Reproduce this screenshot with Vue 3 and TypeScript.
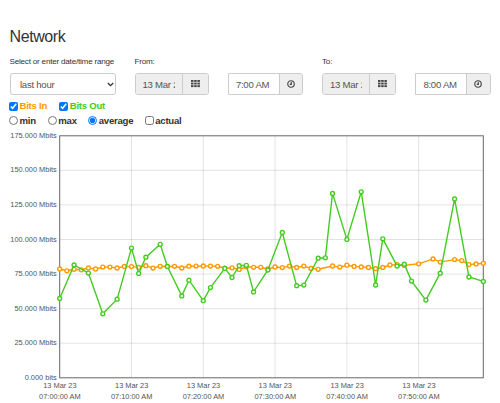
<script setup lang="ts">
import { ref } from 'vue'

type Sample = [minute: number, y: number]

const range = ref('last hour')
const mode = ref('average')
const showIn = ref(true)
const showOut = ref(true)
const actual = ref(false)

const pickers = [
  { label: 'From:', date: '13 Mar 23', time: '7:00 AM' },
  { label: 'To:', date: '13 Mar 23', time: '8:00 AM' },
]
const modes = ['min', 'max', 'average']

const left = 59.7
const right = 483.3
const top = 135.8
const bottom = 377.8
const px = (minute: number) => left + (minute * (right - left)) / 59

const yTicks = [175, 150, 125, 100, 75, 50, 25, 0].map((v) => ({
  y: bottom - (v * (bottom - top)) / 175,
  text: v ? `${v}.000 Mbits` : '0.000 bits',
}))
const xTicks = [0, 10, 20, 30, 40, 50].map((m) => ({
  x: px(m),
  text: `07:${String(m).padStart(2, '0')}:00 AM`,
}))

const bitsIn: Sample[] = [
  [0, 269], [1, 270.8], [2, 269.3], [3, 269.8], [4, 268], [5, 269], [6, 267.1], [7, 267.1], [8, 268],
  [9, 266.4], [10, 266.6], [11, 267.4], [12, 265.7], [13, 268.1], [14, 266.3], [15, 266.5], [16, 266.3],
  [17, 268], [18, 266.2], [19, 266.1], [20, 266], [21, 266.1], [22, 266.3], [23, 268.1], [24, 267.8],
  [25, 269.4], [26, 266.8], [27, 267.3], [28, 267.3], [29, 269], [30, 267], [31, 267.6], [32, 266.1],
  [33, 267.5], [34, 266.1], [35, 268.4], [36, 269.3], [38, 266], [39, 267.1], [40, 265.2], [41, 266.4],
  [42, 266.9], [43, 267.5], [44, 268.7], [45, 267.5], [46, 265], [47, 264.6], [48, 265.4], [50, 263.8],
  [52, 258.9], [53, 262.1], [55, 259.6], [56, 260.6], [57, 264.6], [58, 263.9], [59, 263.2],
]
const bitsOut: Sample[] = [
  [0, 298.5], [2, 265], [4, 273.1], [6, 313.8], [8, 299.2], [10, 248.1], [11, 273.4], [12, 257.2],
  [14, 244.3], [15, 266.5], [17, 295.9], [18, 280.2], [20, 300.7], [21, 287.6], [23, 268.4], [24, 277.5],
  [25, 265.7], [26, 265.3], [27, 291.9], [29, 270], [31, 232.5], [33, 285.7], [34, 285.1], [36, 258.2],
  [37, 257.8], [38, 193.4], [40, 239.4], [42, 191.8], [44, 285], [45, 238.8], [47, 266.1], [48, 264.2],
  [49, 281.1], [51, 300.1], [53, 273.2], [55, 198.9], [57, 277], [59, 281.4],
]
const series = [
  { name: 'in', points: bitsIn, visible: showIn },
  { name: 'out', points: bitsOut, visible: showOut },
]
const line = (points: Sample[]) => points.map(([m, y]) => `${px(m)},${y}`).join(' ')
</script>

<template>
  <main class="panel">
    <h1>Network</h1>
    <div class="filters">
      <div class="field range">
        <label for="range">Select or enter date/time range</label>
        <div class="select-wrap">
          <select id="range" v-model="range">
            <option>last hour</option>
          </select>
          <svg class="chevron" viewBox="0 0 7 5"><path d="M.8 1 3.5 3.7 6.2 1" /></svg>
        </div>
      </div>
      <div v-for="p in pickers" :key="p.label" class="field picker">
        <label>{{ p.label }}</label>
        <div class="inputs">
          <div class="group date">
            <div class="value"><span>{{ p.date }}</span></div>
            <button type="button" aria-label="Choose date">
              <svg class="grid-icon" viewBox="0 0 9 8">
                <g v-for="r in 3" :key="r">
                  <rect v-for="c in 3" :key="c" :x="(c - 1) * 3.2" :y="(r - 1) * 2.6" width="2.5" height="1.9" />
                </g>
              </svg>
            </button>
          </div>
          <div class="group time">
            <div class="value"><span>{{ p.time }}</span></div>
            <button type="button" aria-label="Choose time">
              <svg class="clock-icon" viewBox="0 0 8 8">
                <circle cx="4" cy="4" r="3.25" />
                <path d="M4.3 2V4.3H2.7" />
              </svg>
            </button>
          </div>
        </div>
      </div>
    </div>

    <div class="options series-options">
      <label class="in"><input v-model="showIn" type="checkbox" />Bits In</label>
      <label class="out"><input v-model="showOut" type="checkbox" />Bits Out</label>
    </div>
    <div class="options mode-options">
      <label v-for="m in modes" :key="m" :class="m"><input v-model="mode" type="radio" name="mode" :value="m" />{{ m }}</label>
      <label><input v-model="actual" type="checkbox" />actual</label>
    </div>

    <svg class="chart" viewBox="0 128 500 275" width="500" height="275">
      <g class="gridlines">
        <line v-for="t in yTicks.slice(1, -1)" :key="t.y" :x1="left" :x2="right" :y1="t.y" :y2="t.y" />
        <line v-for="t in xTicks.slice(1)" :key="t.x" :x1="t.x" :x2="t.x" :y1="top" :y2="bottom" />
      </g>
      <rect class="frame" :x="left" :y="top" :width="right - left" :height="bottom - top" />
      <g class="y-labels">
        <text v-for="t in yTicks" :key="t.y" x="56.8" :y="t.y + 2.1">{{ t.text }}</text>
      </g>
      <g class="x-labels">
        <g v-for="t in xTicks" :key="t.x">
          <text :x="t.x + 0.2" y="388.4">13 Mar 23</text>
          <text :x="t.x + 0.2" y="399.2">{{ t.text }}</text>
        </g>
      </g>
      <template v-for="s in series" :key="s.name">
        <g v-if="s.visible.value" :class="['series', s.name]">
          <polyline :points="line(s.points)" />
          <circle v-for="[m, y] in s.points" :key="m" :cx="px(m)" :cy="y" r="1.95" />
        </g>
      </template>
    </svg>
  </main>
</template>

<style>
body {
  margin: 0;
  background: #fff;
}
</style>

<style scoped>
.panel {
  box-sizing: border-box;
  width: 500px;
  height: 403px;
  padding-top: 27px;
  overflow: hidden;
  font-family: "Liberation Sans", Arial, sans-serif;
  font-size: 9.6px;
  letter-spacing: -0.26px;
  color: #333;
}
h1 {
  margin: 0 0 10px 9.5px;
  font-size: 16px;
  letter-spacing: -0.4px;
  font-weight: 400;
  line-height: 20px;
}
.filters {
  display: flex;
  padding-left: 9.5px;
}
.field > label {
  display: block;
  height: 16px;
  font-size: 8.1px;
  letter-spacing: -0.21px;
  line-height: 10px;
  white-space: nowrap;
}
.range {
  width: 125px;
  flex: none;
}
.picker {
  width: 187.5px;
  flex: none;
}
.select-wrap {
  position: relative;
  width: 106.5px;
}
select {
  appearance: none;
  box-sizing: border-box;
  display: block;
  width: 106.5px;
  height: 22px;
  padding: 0 9.5px;
  border: 1px solid #ccc;
  border-radius: 3px;
  background: #fff;
  color: #555;
  font: inherit;
  letter-spacing: inherit;
}
.chevron {
  position: absolute;
  right: 2.5px;
  top: 9px;
  width: 7px;
  height: 5px;
  fill: none;
  stroke: #333;
  stroke-width: 1.3;
}
.inputs {
  display: flex;
  gap: 19px;
}
.group {
  box-sizing: border-box;
  display: flex;
  height: 22px;
  border: 1px solid #ccc;
  border-radius: 3px;
  overflow: hidden;
  color: #555;
}
.date {
  width: 74.4px;
}
.time {
  width: 75.2px;
  border-radius: 0 3px 3px 0;
}
.value {
  flex: 1;
  min-width: 0;
  padding: 0 7px;
  line-height: 21px;
  white-space: nowrap;
}
.value span {
  display: block;
  overflow: hidden;
}
.date .value {
  background: #eee;
}
button {
  box-sizing: border-box;
  display: flex;
  align-items: center;
  justify-content: center;
  flex: none;
  padding: 0;
  border: 0;
  border-left: 1px solid #ccc;
  background: #eee;
  color: #444;
}
.date button {
  width: 26px;
}
.time button {
  width: 23.5px;
}
.grid-icon {
  width: 9px;
  height: 8px;
  margin-top: -1px;
  fill: #444;
}
.clock-icon {
  width: 8px;
  height: 8px;
  fill: none;
  stroke: #444;
  stroke-width: 1.15;
}
.options {
  display: flex;
  padding-left: 9.2px;
  font-weight: 700;
  line-height: 12px;
}
.options label {
  display: flex;
  align-items: center;
}
.options input {
  width: 9px;
  height: 9px;
  margin: 0 1.3px 0 0;
}
.series-options {
  gap: 12.5px;
  margin-top: 5px;
}
.mode-options {
  margin-top: 3px;
}
.mode-options input {
  margin-top: -2px;
}
.min {
  width: 38.8px;
}
.max {
  width: 40.5px;
}
.average {
  width: 56.5px;
}
label.in {
  color: #ff9900;
}
label.out {
  color: #44cc22;
}
.chart {
  display: block;
  margin-top: 1px;
  letter-spacing: 0;
}
.gridlines {
  stroke: #000;
  stroke-opacity: 0.13;
  stroke-width: 0.9;
}
.frame {
  fill: none;
  stroke: #666;
  stroke-width: 1;
}
.chart text {
  font-size: 7.42px;
  fill: #545454;
}
.y-labels {
  text-anchor: end;
}
.x-labels {
  text-anchor: middle;
}
.series {
  fill: #fff;
  stroke-width: 1.4;
}
.series polyline {
  fill: none;
}
.series.in {
  stroke: #ff9900;
}
.series.out {
  stroke: #44cc22;
}
</style>
